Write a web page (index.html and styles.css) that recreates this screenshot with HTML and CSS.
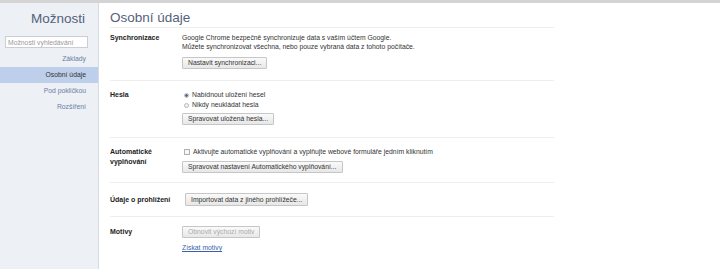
FILE: index.html
```html
<!DOCTYPE html>
<html lang="cs">
<head>
<meta charset="utf-8">
<title>Možnosti</title>
<link rel="stylesheet" href="styles.css">
</head>
<body>
<div class="topbar"></div>
<div class="page">
  <aside class="sidebar">
    <h1 class="side-title">Možnosti</h1>
    <div class="search"><span class="search-ph">Možnosti vyhledávání</span></div>
    <nav class="nav">
      <div class="nav-item">Základy</div>
      <div class="nav-item selected">Osobní údaje</div>
      <div class="nav-item">Pod pokličkou</div>
      <div class="nav-item">Rozšíření</div>
    </nav>
  </aside>
  <main class="main">
    <h2 class="heading">Osobní údaje</h2>
    <section class="section sec-sync">
      <div class="label">Synchronizace</div>
      <div class="body">
        <div class="text">Google Chrome bezpečně synchronizuje data s vaším účtem Google.<br>Můžete synchronizovat všechna, nebo pouze vybraná data z tohoto počítače.</div>
        <button class="btn">Nastavit synchronizaci...</button>
      </div>
    </section>
    <section class="section sec-pass">
      <div class="label">Hesla</div>
      <div class="body">
        <div class="opt"><span class="radio checked"></span>Nabídnout uložení hesel</div>
        <div class="opt"><span class="radio"></span>Nikdy neukládat hesla</div>
        <button class="btn">Spravovat uložená hesla...</button>
      </div>
    </section>
    <section class="section sec-auto">
      <div class="label">Automatické<br>vyplňování</div>
      <div class="body">
        <div class="opt"><span class="check"></span>Aktivujte automatické vyplňování a vyplňujte webové formuláře jedním kliknutím</div>
        <button class="btn">Spravovat nastavení Automatického vyplňování...</button>
      </div>
    </section>
    <section class="section sec-import">
      <div class="label">Údaje o prohlížení</div>
      <div class="body">
        <button class="btn">Importovat data z jiného prohlížeče...</button>
      </div>
    </section>
    <section class="section sec-themes last">
      <div class="label">Motivy</div>
      <div class="body">
        <button class="btn disabled">Obnovit výchozí motiv</button>
        <a class="link" href="#">Získat motivy</a>
      </div>
    </section>
  </main>
</div>
</body>
</html>
```
FILE: styles.css
```css
* { box-sizing: border-box; }
html, body { margin: 0; padding: 0; height: 100%; }
body {
  font-family: "Liberation Sans", Arial, sans-serif;
  font-size: 6.8px;
  color: #222;
  background: #fff;
  display: flex;
  flex-direction: column;
}
.topbar { height: 3px; background: #d4d4d4; flex: none; }
.page { flex: 1; display: flex; }
.sidebar {
  width: 99px;
  flex: none;
  background: #edf0f5;
  border-right: 1px solid #d6dbe4;
  padding-top: 8px;
}
.side-title {
  margin: 0 13px 0 0;
  text-align: right;
  font-weight: normal;
  font-size: 13.5px;
  color: #53627b;
  line-height: 16px;
}
.search {
  margin: 9px 10px 0 5px;
  height: 12px;
  border: 1px solid #c9cdd4;
  background: #fff;
  display: flex;
  align-items: center;
  padding-left: 2px;
}
.search-ph { font-size: 6.8px; color: #9a9a9a; }
.nav { margin-top: 3px; display: flex; flex-direction: column; }
.nav-item {
  height: 16px;
  line-height: 16px;
  text-align: right;
  padding-right: 12px;
  color: #6a7ea6;
  font-size: 6.8px;
}
.nav-item.selected { background: #bdcfea; color: #333; }
.main { flex: none; width: 444px; margin-left: 11px; padding-top: 6px; }
.heading {
  margin: 0;
  font-weight: normal;
  font-size: 13.5px;
  line-height: 17px;
  color: #53627b;
  padding-bottom: 1px;
  border-bottom: 1px solid #eeeeee;
}
.section {
  display: flex;
  border-bottom: 1px solid #eeeeee;
}
.section.last { border-bottom: none; }
.label {
  width: 72px;
  flex: none;
  font-weight: bold;
  font-size: 7px;
  line-height: 10px;
  color: #222;
}
.body { display: flex; flex-direction: column; align-items: flex-start; }
.text { line-height: 9px; font-size: 6.8px; color: #333; }
.opt { display: flex; align-items: center; line-height: 10px; font-size: 6.8px; color: #333; }
.radio {
  width: 5px; height: 5px; border-radius: 50%;
  border: 1px solid #b8b8b8; background: #f2f2f2; margin: 0 3px 0 2px;
}
.radio.checked { background: radial-gradient(circle, #4a6fa5 0 1.2px, #e8e8e8 1.6px); }
.check { width: 6px; height: 6px; border: 1px solid #b0b0b0; background: #f6f6f6; margin: 0 3px 0 2px; }
.btn {
  font-family: inherit;
  font-size: 6.8px;
  color: #333;
  height: 12px;
  padding: 0 5px;
  border: 1px solid #c6c6c6;
  border-radius: 1px;
  background: linear-gradient(#fafafa, #e7e7e7);
  line-height: 10px;
}
.btn.disabled { color: #aaa; }
.link { color: #3b5fa8; text-decoration: underline; font-size: 6.8px; margin-top: 5px; line-height: 9px; }

.sec-sync { padding: 5px 0 11px; }
.sec-sync .btn { margin-top: 6px; }
.sec-pass { padding: 9px 0 12px; }
.sec-pass .btn { margin-top: 3px; }
.sec-auto { padding: 9px 0 9px; }
.sec-auto .btn { margin-top: 4px; }
.sec-import { padding: 10px 0 10px; align-items: center; }
.sec-import .body { margin-left: 3px; }
.sec-import .btn { height: 13px; }
.sec-themes { padding: 9px 0; }
.sec-themes .label { margin-top: 1px; }
```
